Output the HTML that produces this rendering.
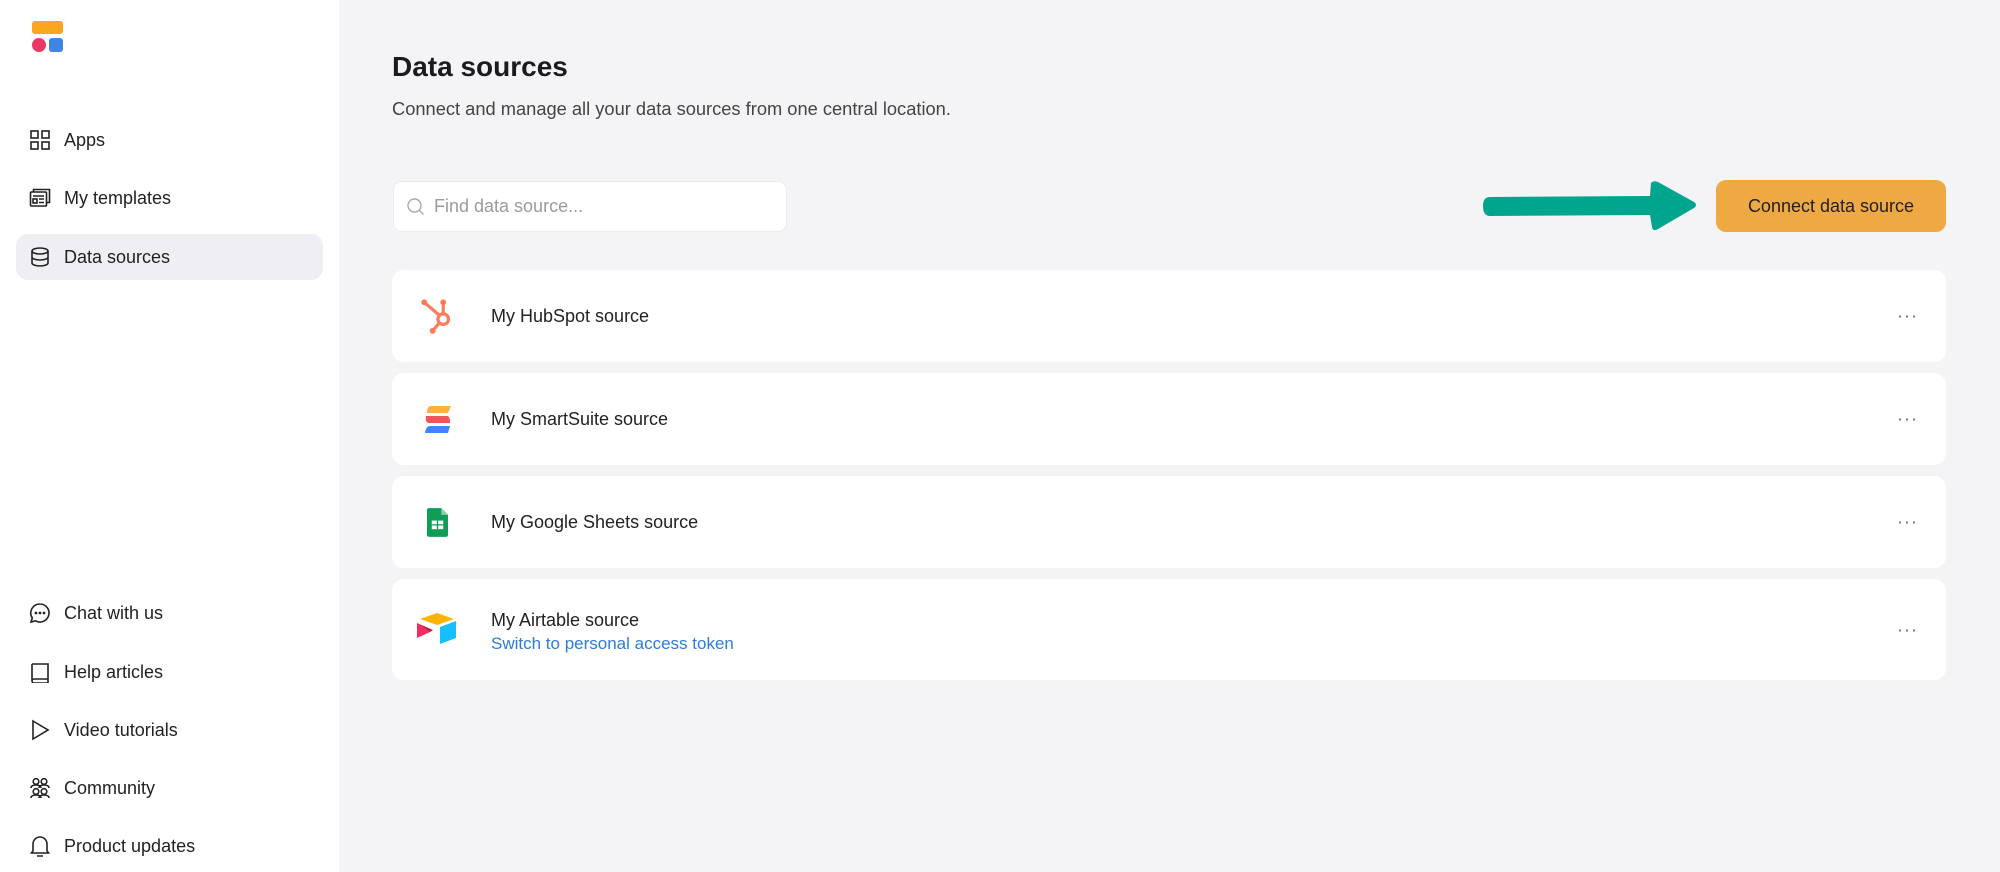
<!DOCTYPE html>
<html><head><meta charset="utf-8"><style>
*{margin:0;padding:0;box-sizing:border-box}
body{width:2000px;height:872px;background:#f4f4f6;font-family:"Liberation Sans",sans-serif;color:#1f1f24;position:relative;overflow:hidden}
.side{position:absolute;left:0;top:0;width:339px;height:872px;background:#fff}
.nav{position:absolute;left:16px;width:307px;height:46px;display:flex;align-items:center;font-size:18px;color:#222}
.nav svg{position:absolute;left:13px;width:22px;height:22px;fill:none;stroke:#222;stroke-width:1.6}
.nav span{position:absolute;left:48px}
.active{background:#efeff3;border-radius:12px}
.abs{position:absolute}
.card{position:absolute;left:392px;width:1554px;background:#fff;border-radius:12px}
.card .t{position:absolute;left:99px;font-size:18px;color:#222}
.dots{position:absolute;left:1505px;top:50%;transform:translateY(-50%);font-size:18px;color:#666;letter-spacing:1px}
</style></head><body>
<div class="side">
<div class="abs" style="left:32px;top:21px;width:31px;height:13px;background:#f9a61c;border-radius:3px"></div>
<div class="abs" style="left:32px;top:38px;width:14px;height:14px;background:#e93967;border-radius:50%"></div>
<div class="abs" style="left:49px;top:38px;width:14px;height:14px;background:#3e86e0;border-radius:3px"></div>

<div class="nav" style="top:117px"><svg viewBox="0 0 22 22"><rect x="2" y="2" width="7" height="7"/><rect x="13" y="2" width="7" height="7"/><rect x="2" y="13" width="7" height="7"/><rect x="13" y="13" width="7" height="7"/></svg><span>Apps</span></div>
<div class="nav" style="top:175px"><svg viewBox="0 0 22 22"><rect x="1.5" y="5" width="16" height="14" rx="1"/><path d="M4.5 5V2.5h16v13h-3"/><rect x="4" y="12" width="4" height="4"/><path d="M10 12h5M10 15.5h5M4 9h11"/></svg><span>My templates</span></div>
<div class="nav active" style="top:234px"><svg viewBox="0 0 22 22"><ellipse cx="11" cy="5" rx="8" ry="3"/><path d="M3 5v12c0 1.7 3.6 3 8 3s8-1.3 8-3V5M3 11c0 1.7 3.6 3 8 3s8-1.3 8-3"/></svg><span>Data sources</span></div>

<div class="nav" style="top:590px"><svg viewBox="0 0 22 22"><path d="M11 2a9 9 0 1 1-4.5 16.8L2 20l1.3-4A9 9 0 0 1 11 2z"/><circle cx="7" cy="11" r=".6" fill="#222"/><circle cx="11" cy="11" r=".6" fill="#222"/><circle cx="15" cy="11" r=".6" fill="#222"/></svg><span>Chat with us</span></div>
<div class="nav" style="top:649px"><svg viewBox="0 0 22 22"><path d="M3 3h16v15H5a2 2 0 0 0 0 4h14V18M3 3v17"/></svg><span>Help articles</span></div>
<div class="nav" style="top:707px"><svg viewBox="0 0 22 22"><path d="M4 2l15 9-15 9z"/></svg><span>Video tutorials</span></div>
<div class="nav" style="top:765px"><svg viewBox="0 0 22 22"><circle cx="7" cy="4.5" r="2.8"/><circle cx="15" cy="4.5" r="2.8"/><path d="M2 11c0-2 2-3 5-3s5 1 5 3M10 11c0-2 2-3 5-3s5 1 5 3"/><circle cx="7" cy="14.5" r="2.8"/><circle cx="15" cy="14.5" r="2.8"/><path d="M2 21c0-2 2-3 5-3s5 1 5 3M10 21c0-2 2-3 5-3s5 1 5 3"/></svg><span>Community</span></div>
<div class="nav" style="top:823px"><svg viewBox="0 0 22 22"><path d="M4 16V9a7 7 0 0 1 14 0v7l1.5 2h-17zM8 21h6"/></svg><span>Product updates</span></div>
</div>

<div class="abs" style="left:392px;top:51px;font-size:28px;font-weight:bold;color:#1a1a1f">Data sources</div>
<div class="abs" style="left:392px;top:98px;font-size:18.3px;color:#444">Connect and manage all your data sources from one central location.</div>

<div class="abs" style="left:393px;top:181px;width:394px;height:51px;background:#fff;border-radius:9px;border:1px solid #ececf0">
<svg class="abs" style="left:12px;top:15px" width="20" height="20" viewBox="0 0 20 20" fill="none" stroke="#aaa" stroke-width="1.4"><circle cx="8.5" cy="8.5" r="6.5"/><path d="M13.5 13.5l4 4"/></svg>
<span class="abs" style="left:40px;top:14px;font-size:18px;color:#9a9aa0">Find data source...</span></div>

<svg class="abs" style="left:1480px;top:178px" width="220" height="58" viewBox="0 0 220 58"><path d="M10 19L170 18 171 5Q174 2 178 4L214 24Q218 27 214 30L178 51Q173 54 172 49L170 37 10 38Q3 38 3 28 3 19 10 19z" fill="#00a58e"/></svg>
<div class="abs" style="left:1716px;top:180px;width:230px;height:52px;background:#efa942;border-radius:10px;font-size:18px;color:#1f1f2a;display:flex;align-items:center;justify-content:center">Connect data source</div>

<div class="card" style="top:270px;height:92px">
<svg class="abs" style="left:28px;top:27px" width="38" height="38" viewBox="0 0 36 36"><g stroke="#ff7a59" stroke-width="3" fill="none" stroke-linecap="round"><circle cx="22" cy="21" r="5"/><path d="M4 5l14 12M22 5v11M18 25l-6 7"/></g><circle cx="4" cy="5" r="2.8" fill="#ff7a59"/><circle cx="22" cy="5" r="2.8" fill="#ff7a59"/><circle cx="12" cy="32" r="2.8" fill="#ff7a59"/></svg>
<div class="t" style="top:36px">My HubSpot source</div><div class="dots">···</div></div>

<div class="card" style="top:373px;height:92px">
<svg class="abs" style="left:33px;top:33px" width="26" height="27" viewBox="0 0 26 27"><path d="M6 0h20l-3 7H2q0-7 4-7z" fill="#fbb13c"/><path d="M1 10h21q3 0 3 7H4q-4 0-3-7z" fill="#f2545b"/><path d="M5 20h20l-2 7H0q1-7 5-7z" fill="#3a86ff"/></svg>
<div class="t" style="top:36px">My SmartSuite source</div><div class="dots">···</div></div>

<div class="card" style="top:476px;height:92px">
<svg class="abs" style="left:35px;top:31px" width="21" height="31" viewBox="0 0 22 30"><path d="M2 0h13l7 7v21a2 2 0 0 1-2 2H2a2 2 0 0 1-2-2V2a2 2 0 0 1 2-2z" fill="#0f9d58"/><path d="M15 0v7h7z" fill="#87ceac"/><rect x="5" y="13" width="12" height="9" fill="#fff"/><path d="M5 17.5h12M11 13v9" stroke="#0f9d58" stroke-width="1.4"/></svg>
<div class="t" style="top:36px">My Google Sheets source</div><div class="dots">···</div></div>

<div class="card" style="top:579px;height:101px">
<svg class="abs" style="left:25px;top:33px" width="42" height="34" viewBox="0 0 42 34"><path d="M20 1L3 7l17 6 17-6z" fill="#fcb400"/><path d="M23 15v17l16-6V9z" fill="#18bfff"/><path d="M0 11v15l13-6z" fill="#f82b60"/><path d="M0 11l13 9 3-2z" fill="#ba1e45"/></svg>
<div class="t" style="top:31px">My Airtable source</div>
<div class="t" style="top:55px;font-size:17px;color:#2d7be0">Switch to personal access token</div><div class="dots">···</div></div>
</body></html>
